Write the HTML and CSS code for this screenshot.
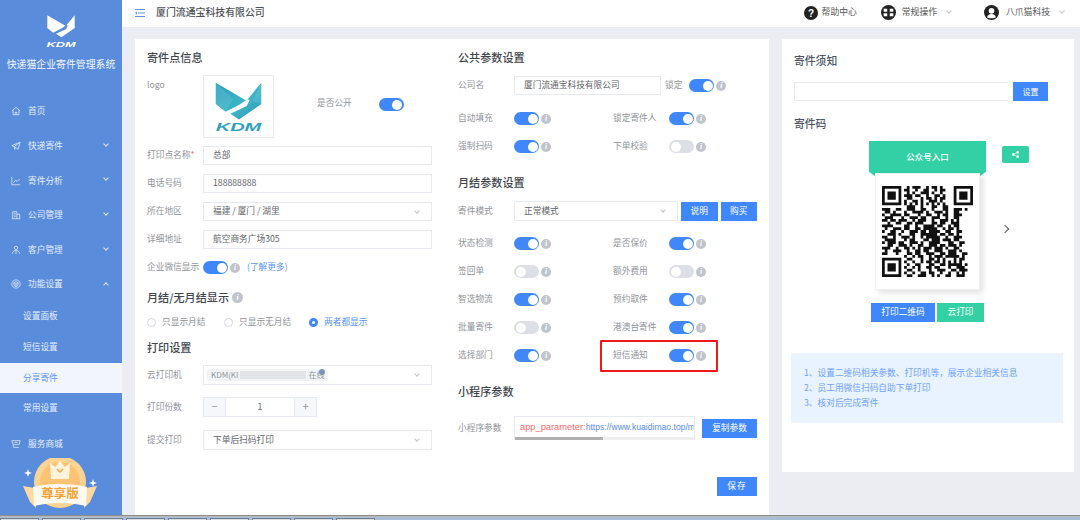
FILE: index.html
```html
<!DOCTYPE html>
<html lang="zh">
<head>
<meta charset="utf-8">
<title>寄件码设置</title>
<link rel="stylesheet" href="styles.css">
</head>
<body>
<div class="window">
  <aside class="sidebar">
    <div class="brand">
      <svg class="brand-logo" viewBox="10 5 51 60"><path class="logo-white" d="M12 7 43 25 36 30 22 37 12 29zM59 7V29L36 45 27 39 44 31 47 25 45 24z"/><text class="kdm-white" x="35.500" y="62" text-anchor="middle" textLength="50" lengthAdjust="spacingAndGlyphs">KDM</text></svg>
      <div class="brand-name">快递猫企业寄件管理系统</div>
    </div>
    <nav class="menu">
      <a class="item"><svg class="mi" viewBox="0 0 12 12"><path d="M1 6 6 1.500 11 6M2.500 5V10.500H9.500V5M5 10.500V7.500H7V10.500"/></svg>首页</a>
      <a class="item"><svg class="mi" viewBox="0 0 12 12"><path d="M1 5.500 11 1.500 8.500 10 5.500 7.500 4.500 10 3.800 6.800zM3.800 6.800 11 1.500"/></svg>快递寄件<i class="chev"></i></a>
      <a class="item"><svg class="mi" viewBox="0 0 12 12"><path d="M1 1V10.500H11M3 8 5.500 5 7.500 6.500 10.500 3.500"/></svg>寄件分析<i class="chev"></i></a>
      <a class="item"><svg class="mi" viewBox="0 0 12 12"><path d="M2 10.500V2H7V10.500M7 5H10.500V10.500M1 10.500H11M3.500 4H5.500M3.500 6H5.500M3.500 8H5.500"/></svg>公司管理<i class="chev"></i></a>
      <a class="item"><svg class="mi" viewBox="0 0 12 12"><circle cx="6" cy="3.500" r="2"/><path d="M1.500 10.500C2 7.500 4 6.500 6 6.500S10 7.500 10.500 10.500M6 7V10.500"/></svg>客户管理<i class="chev"></i></a>
      <a class="item open"><svg class="mi" viewBox="0 0 12 12"><circle cx="6" cy="6" r="5"/><path d="M6 3 8.500 4.500V7.500L6 9 3.500 7.500V4.500zM3.500 4.500 6 6 8.500 4.500M6 6V9"/></svg>功能设置<i class="chev up"></i></a>
      <a class="sub">设置面板</a>
      <a class="sub">短信设置</a>
      <a class="sub active">分享寄件</a>
      <a class="sub">常用设置</a>
      <a class="item last"><svg class="mi" viewBox="0 0 12 12"><path d="M1 2H11L10 6.500H2.500zM2.500 6.500 3 10H9.500M4 4H8"/></svg>服务商城</a>
    </nav>
    <svg class="vip" viewBox="0 0 80 58">
      <circle class="vip-ring" cx="40" cy="24" r="26"/>
      <circle class="vip-core" cx="40" cy="24" r="20"/>
      <path class="vip-crown" d="M30 5 35 9 40 3 45 9 50 5 49 21H31z"/>
      <path class="vip-mark" d="M37 11 40 14 43 11"/>
      <path class="vip-tail" d="M3 28 14 30 16 50 10 44zM77 28 66 30 64 50 70 44z"/>
      <path class="vip-ribbon" d="M13 29C30 25 50 25 67 29L66 48C50 44 30 44 14 48z"/>
      <text class="vip-text" x="40" y="40" text-anchor="middle">尊享版</text>
      <path class="vip-star" d="M8 11 9 14 12 15 9 16 8 19 7 16 4 15 7 14zM73 21 74 24 77 25 74 26 73 29 72 26 69 25 72 24z"/>
    </svg>
  </aside>

  <div class="main">
    <header class="topbar">
      <svg class="fold" viewBox="0 0 10 8"><path d="M0 .500H10M3 4H10M0 7.500H10"/><path class="fold-arrow" d="M2 2.500 0 4 2 5.500z"/></svg>
      <span class="company">厦门流通宝科技有限公司</span>
      <div class="tools">
        <span class="tool help"><svg class="ti" viewBox="0 0 14 14"><circle cx="7" cy="7" r="7"/><text class="ti-q" x="7" y="10.500" text-anchor="middle">?</text></svg>帮助中心</span>
        <span class="tool ops"><svg class="ti" viewBox="0 0 14 14"><circle cx="7" cy="7" r="7"/><path class="ti-cut" d="M2.500 3.500H5.800V6.300H2.500zM8.200 3.500H11.500V6.300H8.200zM2.500 7.700H5.800V10.500H2.500zM8.200 7.700H11.500V10.500H8.200z"/></svg>常规操作<i class="chev dark"></i></span>
        <span class="tool user"><svg class="ti" viewBox="0 0 14 14"><circle cx="7" cy="7" r="7"/><circle class="ti-cut" cx="7" cy="5.500" r="2.600"/><path class="ti-cut" d="M2.800 11.500C3.500 9.300 5 8.500 7 8.500S10.500 9.300 11.200 11.500C9 12.800 5 12.800 2.800 11.500z"/></svg>八爪猫科技<i class="chev dark"></i></span>
      </div>
    </header>

    <div class="content">
      <section class="card settings">
        <div class="col-left">
          <h2 class="title">寄件点信息</h2>
          <div class="logo-row">
            <span class="lab logo-lab">logo</span>
            <div class="logo-box">
              <svg class="logo-art" viewBox="0 0 71 63">
                <defs><linearGradient id="teal" x1="0" y1="0" x2="1" y2="1"><stop offset="0" stop-color="#2f9fc0"/><stop offset=".6" stop-color="#3cb6c6"/><stop offset="1" stop-color="#2c8fb5"/></linearGradient></defs>
                <path fill="url(#teal)" d="M12 7 43 25 36 30 22 37 12 29zM59 7V29L36 45 27 39 44 31 47 25 45 24z"/>
                <path class="facet" d="M12 7 30 24 22 37 12 29zM59 7 50 26 59 29z"/>
                <text class="kdm-teal" x="35.500" y="57" text-anchor="middle" textLength="47" lengthAdjust="spacingAndGlyphs">KDM</text>
              </svg>
            </div>
            <span class="public-lab">是否公开</span>
            <i class="sw on public-sw"></i>
          </div>
          <div class="field first"><label class="lab">打印点名称<em class="req">*</em></label><div class="input">总部</div></div>
          <div class="field"><label class="lab">电话号码</label><div class="input">188888888</div></div>
          <div class="field"><label class="lab">所在地区</label><div class="input select">福建 / 厦门 / 湖里<i class="chev grey"></i></div></div>
          <div class="field"><label class="lab">详细地址</label><div class="input">航空商务广场305</div></div>
          <div class="wechat"><span class="lab-auto">企业微信显示</span><i class="sw on"></i><i class="info">i</i><a class="more">(了解更多)</a></div>
          <h2 class="title t-month">月结/无月结显示<i class="info big">i</i></h2>
          <div class="radios">
            <span class="radio r1"><i class="dot"></i>只显示月结</span>
            <span class="radio r2"><i class="dot"></i>只显示无月结</span>
            <span class="radio on"><i class="dot"></i>两者都显示</span>
          </div>
          <h2 class="title t-print">打印设置</h2>
          <div class="field tall printer"><label class="lab">云打印机</label>
            <div class="input select tagged"><span class="tag">KDM(KI<span class="redact"></span>在线</span><b class="tag-dot"></b><i class="chev grey"></i></div>
          </div>
          <div class="field tall copies"><label class="lab">打印份数</label>
            <div class="stepper"><span class="step">−</span><span class="num">1</span><span class="step">+</span></div>
          </div>
          <div class="field tall submit"><label class="lab">提交打印</label><div class="input select">下单后扫码打印<i class="chev grey"></i></div></div>
        </div>

        <div class="col-right">
          <h2 class="title">公共参数设置</h2>
          <div class="company-row">
            <label class="lab">公司名</label>
            <div class="input company-input">厦门流通宝科技有限公司</div>
            <span class="lock">锁定</span><i class="sw on"></i><i class="info">i</i>
          </div>
          <div class="opts o-public">
            <div class="opt"><span class="lab">自动填充</span><i class="sw on"></i><i class="info">i</i></div>
            <div class="opt"><span class="lab">锁定寄件人</span><i class="sw on"></i><i class="info">i</i></div>
            <div class="opt"><span class="lab">强制扫码</span><i class="sw on"></i><i class="info">i</i></div>
            <div class="opt"><span class="lab">下单校验</span><i class="sw"></i><i class="info">i</i></div>
          </div>
          <h2 class="title t-settle">月结参数设置</h2>
          <div class="mode-row">
            <label class="lab">寄件模式</label>
            <div class="input select mode">正常模式<i class="chev grey"></i></div>
            <button class="btn explain">说明</button>
            <button class="btn buy">购买</button>
          </div>
          <div class="opts o-settle">
            <div class="opt"><span class="lab">状态检测</span><i class="sw on"></i><i class="info">i</i></div>
            <div class="opt"><span class="lab">是否保价</span><i class="sw on"></i><i class="info">i</i></div>
            <div class="opt"><span class="lab">签回单</span><i class="sw"></i><i class="info">i</i></div>
            <div class="opt"><span class="lab">额外费用</span><i class="sw"></i><i class="info">i</i></div>
            <div class="opt"><span class="lab">智选物流</span><i class="sw on"></i><i class="info">i</i></div>
            <div class="opt"><span class="lab">预约取件</span><i class="sw on"></i><i class="info">i</i></div>
            <div class="opt"><span class="lab">批量寄件</span><i class="sw"></i><i class="info">i</i></div>
            <div class="opt"><span class="lab">港澳台寄件</span><i class="sw on"></i><i class="info">i</i></div>
            <div class="opt"><span class="lab">选择部门</span><i class="sw on"></i><i class="info">i</i></div>
            <div class="opt marked"><span class="lab">短信通知</span><i class="sw on"></i><i class="info">i</i><span class="redbox"></span></div>
          </div>
          <h2 class="title t-mini">小程序参数</h2>
          <div class="param-row">
            <label class="lab">小程序参数</label>
            <div class="param"><div class="param-text"><span class="p-red">app_parameter:</span><span class="p-blue">https://www.kuaidimao.top/m</span></div><div class="scroll"><i class="thumb"></i></div></div>
            <button class="btn copy">复制参数</button>
          </div>
          <div class="save-row"><button class="btn save">保存</button></div>
        </div>
      </section>

      <section class="card side">
        <h2 class="title side-title">寄件须知</h2>
        <div class="notice-row"><div class="input notice"></div><button class="btn set">设置</button></div>
        <h2 class="title side-title code-title">寄件码</h2>
        <div class="qr-stage">
          <div class="qr-head">公众号入口</div>
          <div class="qr-card">
            <svg class="qr" viewBox="0 0 33 33">
              <path class="qr-f" fill-rule="evenodd" d="M0 0h7v7h-7zM1 1v5h5v-5zM2 2h3v3h-3zM26 0h7v7h-7zM27 1v5h5v-5zM28 2h3v3h-3zM0 26h7v7h-7zM1 27v5h5v-5zM2 28h3v3h-3z"/>
              <path class="qr-m" d="M9 .5h1m1 0h3m2 0h1m1 0h2m1 0h1M8 1.500h2m2 0h1m2 0h2m2 0h1m1 0h2M9 2.500h1m1 0h1m2 0h3m1 0h1m2 0h1M8 3.500h3m1 0h2m2 0h1m2 0h2m1 0h1M9 4.500h2m3 0h1m1 0h2m1 0h1m1 0h2M8 5.500h1m2 0h2m1 0h1m2 0h3m1 0h1M8 6.500h1m1 0h1m1 0h1m1 0h1m1 0h1m1 0h1m1 0h1m1 0h1M9 7.500h3m2 0h1m3 0h2m2 0h2M0 8.500h3m2 0h2m2 0h3m2 0h2m2 0h1m3 0h2m2 0h3m1 0h1M1 9.500h2m1 0h1m3 0h1m2 0h4m1 0h1m2 0h3m1 0h1m2 0h2M0 10.500h1m2 0h4m1 0h2m3 0h1m2 0h2m2 0h1m1 0h2m2 0h3M1 11.500h3m3 0h1m2 0h3m1 0h2m2 0h3m2 0h1m2 0h2M0 12.500h2m1 0h2m1 0h3m2 0h1m1 0h3m2 0h1m2 0h3m1 0h1m1 0h1M2 13.500h1m2 0h2m2 0h2m1 0h3m3 0h2m1 0h2m2 0h3M0 14.500h4m4 0h2m2 0h1m2 0h4m1 0h2m2 0h1m1 0h2M1 15.500h1m2 0h3m1 0h2m2 0h2m1 0h5m2 0h1m1 0h2m1 0h1M0 16.500h1m2 0h2m2 0h1m2 0h3m1 0h2m1 0h4m2 0h2m2 0h2M2 17.500h3m1 0h1m3 0h2m2 0h6m1 0h2m1 0h2m1 0h1M0 18.500h2m2 0h1m2 0h3m1 0h1m2 0h1m1 0h5m2 0h1m2 0h3M1 19.500h4m3 0h1m1 0h2m3 0h2m1 0h3m1 0h3m1 0h2M0 20.500h1m1 0h3m1 0h2m2 0h3m1 0h1m2 0h4m3 0h2m2 0h2M2 21.500h2m2 0h3m1 0h1m2 0h2m2 0h3m1 0h2m1 0h3m1 0h1M0 22.500h3m2 0h1m2 0h2m1 0h1m1 0h1m1 0h3m1 0h3m1 0h1m2 0h2M1 23.500h1m2 0h3m2 0h1m2 0h2m1 0h2m2 0h3m2 0h3m1 0h1M0 24.500h2m3 0h1m3 0h2m1 0h2m2 0h3m2 0h2m1 0h3m2 0h2M8 25.500h1m2 0h1m1 0h2m2 0h1m1 0h3m1 0h5m1 0h1M9 26.500h2m3 0h1m2 0h2m1 0h1m1 0h1m3 0h1m1 0h2M8 27.500h1m2 0h1m2 0h1m1 0h2m1 0h2m1 0h1m1 0h1m1 0h1m1 0h1M9 28.500h1m2 0h2m3 0h2m2 0h2m1 0h5m1 0h1M8 29.500h1m2 0h1m1 0h1m2 0h2m1 0h2m3 0h1m2 0h3M9 30.500h2m2 0h1m3 0h1m2 0h3m2 0h2m1 0h3M8 31.500h1m2 0h1m2 0h2m1 0h2m2 0h1m2 0h1m2 0h1m1 0h1M9 32.500h2m2 0h3m2 0h1m1 0h1m2 0h2m2 0h3"/>
            </svg>
          </div>
          <button class="share"><svg class="share-ico" viewBox="0 0 8 8"><circle cx="6.500" cy="1.500" r="1.300"/><circle cx="1.500" cy="4" r="1.300"/><circle cx="6.500" cy="6.500" r="1.300"/><path d="M6.500 1.500 1.500 4 6.500 6.500" fill="none"/></svg></button>
          <i class="next"></i>
        </div>
        <div class="qr-actions"><button class="btn print">打印二维码</button><button class="btn cloud">云打印</button></div>
        <div class="tips">
          <p>1、设置二维码相关参数、打印机等，展示企业相关信息</p>
          <p>2、员工用微信扫码自助下单打印</p>
          <p>3、核对后完成寄件</p>
        </div>
      </section>
    </div>
  </div>
</div>
<footer class="taskbar"><i class="tb"></i><i class="tb"></i><i class="tb"></i><i class="tb"></i><i class="tb"></i><i class="tb"></i><i class="tb"></i><i class="tb"></i><i class="tb"></i></footer>
</body>
</html>
```

FILE: styles.css
```css
* { box-sizing: border-box; }
html, body { margin: 0; height: 520px; overflow: hidden; }
body { font: 8.700px/1.2 "Noto Sans CJK SC", "Noto Sans", sans-serif; color: #606266; background: #ebedf2; }
i, em { font-style: normal; }
h2, p { margin: 0; }
button { font: inherit; border: 0; padding: 0; cursor: pointer; }

.window { display: flex; height: 515px; }

/* sidebar */
.sidebar { width: 122px; flex: none; background: #5a8cdc; color: #e6eefb; overflow: hidden; }
.brand { height: 94px; display: flex; flex-direction: column; align-items: center; padding-top: 14px; }
.brand-logo { width: 30px; height: 35px; display: block; flex: none; }
.logo-white { fill: #fff; }
.kdm-white { fill: #fff; font: italic 700 12px "Liberation Sans", sans-serif; }
.brand-name { margin-top: 8px; font-size: 9.900px; line-height: 14px; white-space: nowrap; color: #f1f5fd; }
.menu { display: flex; flex-direction: column; }
.item { height: 34.700px; display: flex; align-items: center; padding-left: 11px; gap: 7px; position: relative; }
.item.open { height: 33.700px; }
.mi { width: 10px; height: 10px; flex: none; fill: none; stroke: #e6eefb; stroke-width: .9; }
.item .chev { position: absolute; right: 14px; top: 13px; border-color: #dbe6f8; }
.item .chev.up { top: 16px; }
.sub { height: 30.700px; display: flex; align-items: center; padding-left: 23px; }
.sub.active { background: #f2f6fc; color: #5a94f5; }
.item.last { height: 40px; }
.chev { display: block; width: 4px; height: 4px; border-right: 1px solid #c0c4cc; border-bottom: 1px solid #c0c4cc; transform: rotate(45deg); }
.chev.up { transform: rotate(225deg); }
.chev.grey { margin-left: auto; margin-right: 3px; margin-top: -2px; }
.chev.dark { margin-left: 10px; margin-top: -3px; }
.vip { display: block; width: 80px; height: 58px; margin: -6px 0 0 20px; }
.vip-ring { fill: #fbd393; }
.vip-core { fill: #fdc274; }
.vip-crown { fill: #fff3dc; }
.vip-mark { fill: none; stroke: #f0a53c; stroke-width: 1.500; }
.vip-tail { fill: #fcd9a2; }
.vip-ribbon { fill: #fffaf0; }
.vip-text { fill: #f2a33a; font: 700 12.500px "Noto Sans CJK SC", sans-serif; }
.vip-star { fill: #fff; }

/* top bar */
.main { flex: 1; min-width: 0; display: flex; flex-direction: column; }
.topbar { height: 27px; flex: none; background: #fff; display: flex; align-items: center; padding: 0 16px 2px 13px; }
.fold { width: 10px; height: 8px; fill: none; stroke: #5a94f5; stroke-width: 1; }
.fold-arrow { fill: #5a94f5; stroke: none; }
.company { margin-left: 11px; color: #4d5055; font-size: 9.900px; font-weight: 500; }
.tools { margin-left: auto; display: flex; align-items: center; }
.tool { display: flex; align-items: center; color: #555; font-size: 8.800px; }
.ti { width: 14px; height: 14px; margin-right: 4px; fill: #222; }
.ti-q { fill: #fff; font: 700 10px "Liberation Sans", sans-serif; }
.ti-cut { fill: #fff; }
.help { margin-right: 25px; }
.ops { margin-right: 33px; }
.ops .ti { margin-right: 6px; width: 15px; height: 15px; margin-left: -1px; }
.user .ti { margin-right: 7px; width: 15px; height: 15px; }

/* cards */
.content { flex: 1; min-height: 0; display: flex; align-items: flex-start; gap: 13px; padding: 12px 6px 0 13px; }
.card { background: #fff; }
.settings { width: 634px; height: 476px; flex: none; display: flex; padding: 10px 12px 0; gap: 26px; }
.col-left { width: 285px; flex: none; }
.col-right { width: 299px; flex: none; }
.title { height: 16px; font-size: 11.100px; line-height: 16px; font-weight: 500; color: #41454b; white-space: nowrap; display: flex; align-items: center; }

.lab { width: 56px; flex: none; color: #909399; white-space: nowrap; }
.lab-auto { width: 54px; flex: none; color: #909399; white-space: nowrap; }
.req { color: #f56c6c; }
.input { height: 19px; flex: 1; min-width: 0; border: 1px solid #e6e9ef; padding: 0 9px; display: flex; align-items: center; color: #606266; white-space: nowrap; background: #fff; }
.field { display: flex; align-items: center; margin-top: 9px; height: 19px; }
.field.first { margin-top: 8px; }
.field.tall { height: 20px; }
.field.tall .input { height: 20px; }
.printer { margin-top: 10px; }
.copies { margin-top: 12px; }
.submit { margin-top: 13px; }

.logo-row { display: flex; align-items: flex-start; margin-top: 10px; height: 63px; }
.logo-lab { margin-top: 5px; }
.logo-box { width: 71px; height: 63px; flex: none; border: 1px solid #e6e9ef; }
.logo-art { display: block; width: 69px; height: 61px; }
.facet { fill: #ffffff; opacity: .1; }
.kdm-teal { fill: #2f9fc0; font: italic 700 11px "Liberation Sans", sans-serif; }
.public-lab { margin: 23px 0 0 43px; color: #909399; }
.public-sw { margin: 23px 0 0 27px; }

.sw { display: block; width: 25px; height: 13px; flex: none; border-radius: 7px; background: #dcdfe6; position: relative; }
.sw::after { content: ""; position: absolute; top: 1.500px; left: 1.500px; width: 10px; height: 10px; border-radius: 50%; background: #fff; }
.sw.on { background: #3f87fb; }
.sw.on::after { left: 13.500px; }
.info { width: 10px; height: 10px; flex: none; margin-left: 2px; border-radius: 50%; background: #c0c4cc; color: #fff; font: italic 700 7.500px/10px "Liberation Serif", serif; text-align: center; display: block; }
.info.big { margin-left: 3px; width: 11px; height: 11px; line-height: 11px; }

.wechat { display: flex; align-items: center; height: 13px; margin-top: 12px; }
.wechat .sw { margin-left: 2px; }
.more { margin-left: 7px; color: #5a94f5; }
.t-month { margin-top: 15px; }
.radios { display: flex; height: 12px; margin-top: 11px; }
.radio { display: flex; align-items: center; color: #909399; white-space: nowrap; }
.dot { display: block; width: 9px; height: 9px; border: 1px solid #d3d6dc; border-radius: 50%; margin-right: 6px; background: #fff; }
.r1 { width: 77px; }
.r2 { width: 85px; }
.radio.on { color: #5a94f5; }
.radio.on .dot { border: 3px solid #3f87fb; }
.t-print { margin-top: 11px; }

.tagged { padding-left: 3px; position: relative; }
.tag { display: flex; align-items: center; width: 121px; height: 12px; background: #f2f3f5; border-radius: 2px; padding-left: 4px; color: #909399; font-size: 8px; }
.redact { width: 66px; height: 8px; margin: 0 2px; background: #e3e4e7; }
.tag-dot { position: absolute; left: 115px; top: 3px; width: 6px; height: 6px; border-radius: 50%; background: #7f94b3; }
.stepper { display: flex; width: 114px; height: 20px; border: 1px solid #e6e9ef; }
.step { width: 21px; flex: none; background: #f5f7fa; color: #909399; font-size: 11px; display: flex; align-items: center; justify-content: center; }
.num { flex: 1; display: flex; align-items: center; justify-content: center; border-left: 1px solid #e6e9ef; border-right: 1px solid #e6e9ef; }

.company-row { display: flex; align-items: center; margin-top: 11px; height: 19px; }
.company-input { flex: 0 0 147px; }
.lock { margin: 0 7px 0 4px; color: #909399; }
.opts { display: grid; grid-template-columns: 155px 144px; row-gap: 15px; }
.opt { display: flex; align-items: center; height: 13px; position: relative; }
.o-public { margin-top: 17px; }
.t-settle { margin-top: 21px; }
.mode-row { display: flex; align-items: center; margin-top: 11px; height: 20px; }
.mode { flex: 0 0 164px; height: 20px; }
.btn { height: 19px; background: #3f87fb; color: #fff; display: block; text-align: center; white-space: nowrap; }
.explain { width: 37px; margin-left: 3px; }
.buy { width: 37px; margin-left: 3px; }
.o-settle { margin-top: 16px; }
.redbox { position: absolute; left: -13px; top: -9px; width: 118px; height: 32px; border: 2px solid #f0181b; border-radius: 1px; pointer-events: none; }
.t-mini { margin-top: 21px; }
.param-row { display: flex; align-items: center; margin-top: 17px; height: 24px; }
.param { width: 181px; height: 24px; flex: none; border: 1px solid #e6e9ef; border-bottom: 0; display: flex; flex-direction: column; overflow: hidden; }
.param-text { flex: 1; font: 8.600px/20px "Liberation Sans", sans-serif; padding-left: 5px; white-space: nowrap; overflow: hidden; }
.p-red { color: #f56c6c; font-size: 9.300px; }
.p-blue { color: #5a8cf5; }
.scroll { height: 3px; background: #eeeeee; }
.thumb { display: block; width: 88px; height: 3px; background: #b0b0b0; }
.copy { width: 55px; margin-left: 7px; }
.save-row { display: flex; justify-content: flex-end; margin-top: 37px; }
.save { width: 40px; letter-spacing: 1px; }

/* right panel */
.side { width: 292px; height: 433px; flex: none; padding: 13px 13px 0 12px; }
.side-title { font-size: 10.800px; color: #4b5563; }
.notice-row { display: flex; margin-top: 14px; height: 19px; }
.notice { flex: 0 0 214px; border-right: 0; }
.set { width: 35px; margin-left: 5px; font-size: 8px; }
.code-title { margin-top: 14px; }
.qr-stage { position: relative; display: flex; flex-direction: column; align-items: center; margin-top: 10px; height: 149px; }
.qr-head { width: 117px; height: 35px; flex: none; background: #33cfa5; color: #fff; font-size: 8.500px; font-weight: 500; display: flex; align-items: center; justify-content: center; padding-bottom: 4px; clip-path: polygon(0 0, 100% 0, 100% 88%, 95% 100%, 5% 100%, 0 88%); }
.qr-card { width: 105px; height: 117px; margin-top: -3px; flex: none; background: #fff; border: 1px solid #eff0f3; box-shadow: 3px 3px 6px rgba(0, 0, 0, .12); padding: 12px 6px; position: relative; }
.qr { display: block; width: 91px; height: 91px; }
.qr-f { fill: #111; }
.qr-m { fill: none; stroke: #111; stroke-width: 1; }
.share { position: absolute; left: 208px; top: 5px; width: 27px; height: 17px; background: #33cfa5; border-radius: 2px; display: flex; align-items: center; justify-content: center; }
.share-ico { width: 7px; height: 7px; fill: #fff; stroke: #fff; stroke-width: .7; }
.next { position: absolute; left: 208px; top: 85px; width: 6px; height: 6px; border-top: 1px solid #555; border-right: 1px solid #555; transform: rotate(45deg); }
.qr-actions { display: flex; justify-content: center; gap: 2px; margin-top: 13px; }
.print { width: 64px; }
.cloud { width: 47px; background: #33cfa5; }
.tips { margin: 31px 0 0 -3px; height: 70px; width: 272px; background: #e9f2ff; padding: 12px 13px; color: #6ea3f8; }
.tips p { line-height: 15px; white-space: nowrap; }

/* bottom strip */
.taskbar { height: 5px; display: flex; gap: 3px; padding-top: 2px; background: linear-gradient(#b9b9b9 0 1px, #a9bed6 1px); border-top: 1px solid #8d8d8d; }
.tb { width: 39px; background: #d8dde4; border: 1px solid #6f7f92; border-bottom: 0; }
```
